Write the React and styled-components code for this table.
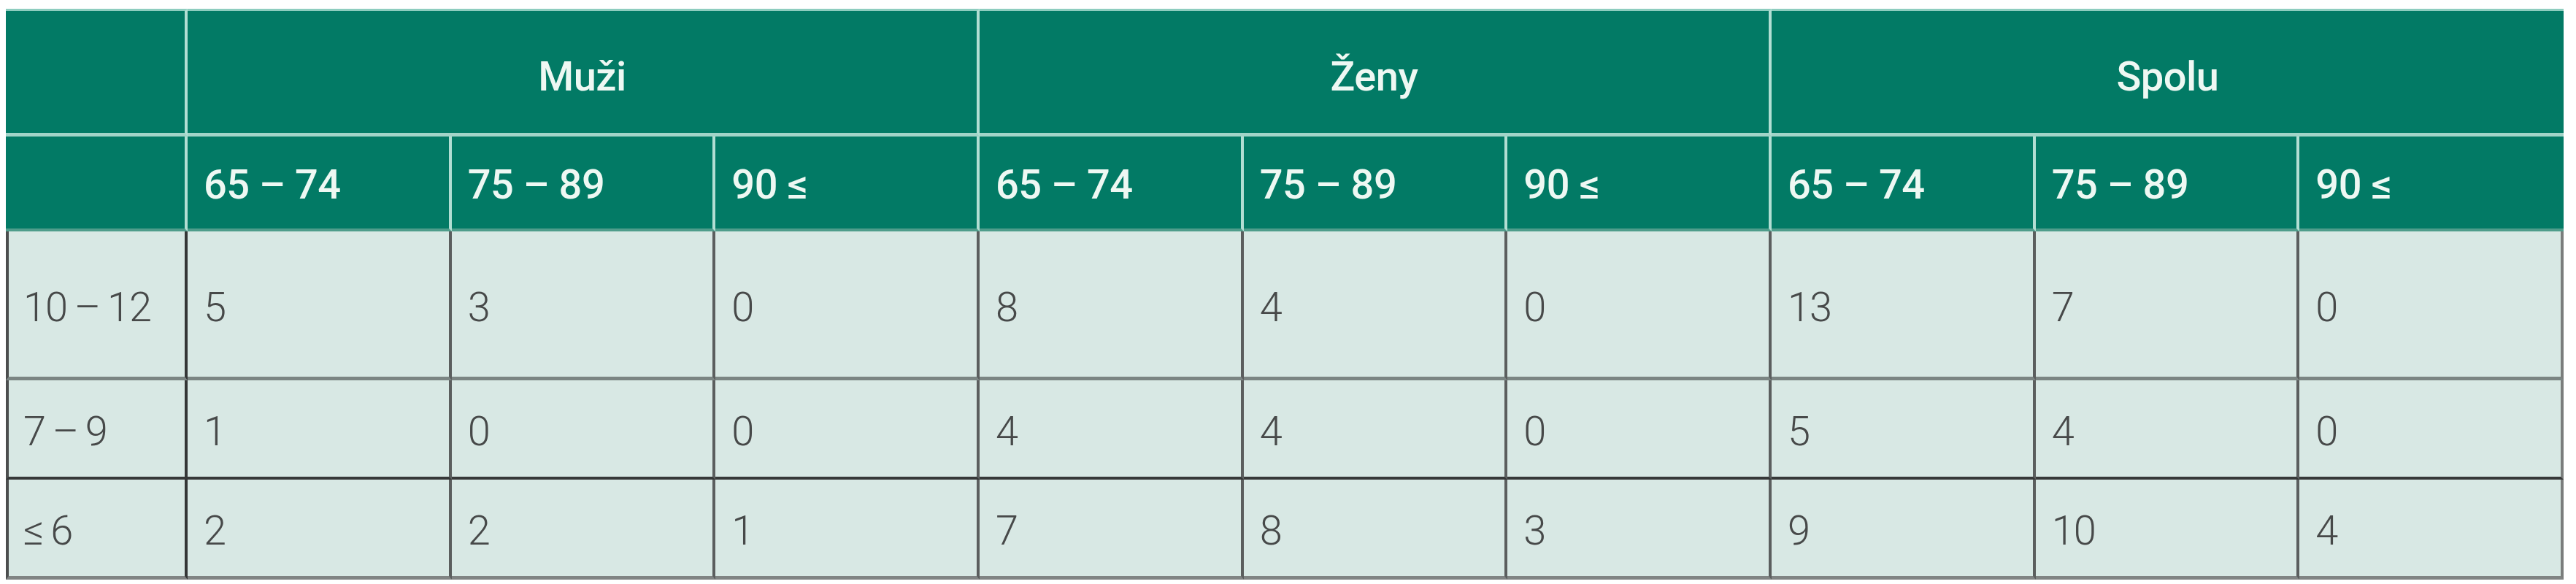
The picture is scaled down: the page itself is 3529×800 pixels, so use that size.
import React from 'react';
import styled, { createGlobalStyle } from 'styled-components';

const GlobalStyle = createGlobalStyle`
  html, body {
    margin: 0;
    padding: 0;
    background: #ffffff;
  }
  body {
    font-family: Roboto, "Liberation Sans", sans-serif;
  }
`;

const groups = ['Muži', 'Ženy', 'Spolu'];
const ages = ['65 – 74', '75 – 89', '90 ≤'];

const rows = [
  { label: '10 – 12', values: [5, 3, 0, 8, 4, 0, 13, 7, 0] },
  { label: '7 – 9', values: [1, 0, 0, 4, 4, 0, 5, 4, 0] },
  { label: '≤ 6', values: [2, 2, 1, 7, 8, 3, 9, 10, 4] },
];

// line under each body row: gray, dark, gray
const rowLines = ['5px solid #7b8583', '4px solid #363838', '5px solid #808483'];

function App() {
  return (
    <Page>
      <GlobalStyle />
      <Grid>
        <HeadCell $top />
        {groups.map((g, i) => (
          <GroupCell key={g} $top $last={i === groups.length - 1}>
            {g}
          </GroupCell>
        ))}

        <HeadCell $second />
        {groups.map((g, gi) =>
          ages.map((a, ai) => (
            <HeadCell
              key={g + a}
              $second
              $last={gi === groups.length - 1 && ai === ages.length - 1}
            >
              {a}
            </HeadCell>
          ))
        )}

        {rows.map((r, ri) => (
          <React.Fragment key={r.label}>
            <BodyCell $first $line={rowLines[ri]}>
              {r.label}
            </BodyCell>
            {r.values.map((v, vi) => (
              <BodyCell
                key={vi}
                $line={rowLines[ri]}
                $last={vi === r.values.length - 1}
              >
                {v}
              </BodyCell>
            ))}
          </React.Fragment>
        ))}
      </Grid>
    </Page>
  );
}

export default App;

const Page = styled.div`
  padding: 12px 17px 6px 8px;
  width: 3529px;
  box-sizing: border-box;
`;

const Grid = styled.div`
  display: grid;
  width: 3504px;
  grid-template-columns: 249px repeat(9, 1fr);
  grid-template-rows: 175px 130px 204px 136px 137px;
`;

const HeadCell = styled.div`
  box-sizing: border-box;
  display: flex;
  align-items: center;
  padding: 6px 0 0 22px;
  background: #027a65;
  color: #eef8f3;
  font-size: 56px;
  font-weight: 500;
  letter-spacing: -0.5px;
  white-space: nowrap;
  border-right: ${p => (p.$last ? 'none' : '4px solid #b2ded3')};
  border-top: ${p => (p.$top ? '3px solid #8ecdbf' : 'none')};
  border-bottom: ${p => (p.$top ? '5px solid #a2d4c8' : '4px solid #4f9d8b')};
`;

const GroupCell = styled(HeadCell)`
  grid-column: span 3;
  justify-content: center;
  padding: 12px 0 0 0;
`;

const BodyCell = styled.div`
  box-sizing: border-box;
  display: flex;
  align-items: center;
  padding: 8px 0 0 ${p => (p.$first ? '20px' : '22px')};
  background: #d8e8e4;
  color: #474949;
  font-size: 56px;
  font-weight: 300;
  letter-spacing: -1px;
  word-spacing: -3px;
  white-space: nowrap;
  border-bottom: ${p => p.$line};
  border-left: ${p => (p.$first ? '4px solid #4c4e4e' : 'none')};
  border-right: 4px solid
    ${p => (p.$first ? '#343636' : p.$last ? '#7a7d7c' : '#5b5e5e')};
`;
